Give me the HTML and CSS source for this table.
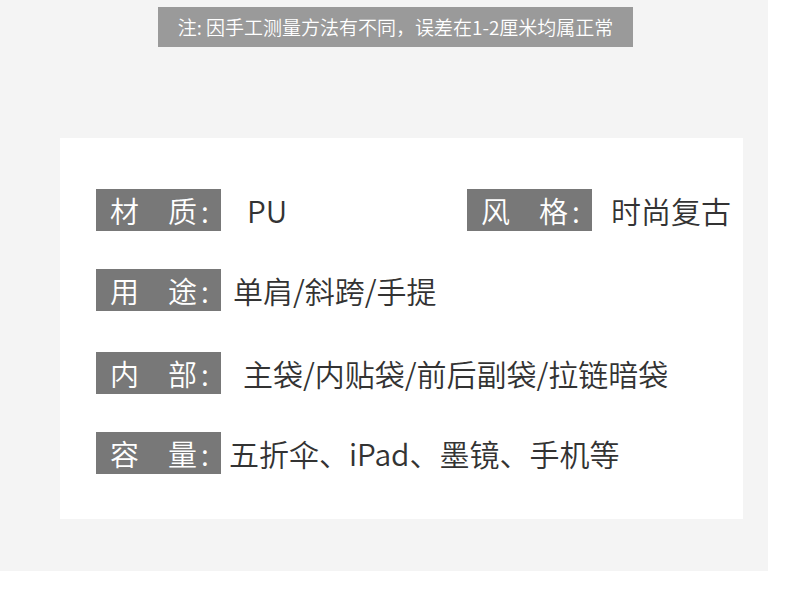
FILE: index.html
```html
<!DOCTYPE html>
<html lang="zh-CN">
<head>
<meta charset="utf-8">
<link rel="stylesheet" href="styles.css">
</head>
<body>
<div class="page">
  <div class="note">注: 因手工测量方法有不同，误差在1-2厘米均属正常</div>
  <div class="card">
    <div class="row">
      <span class="label">材　质<span class="label-colon">:</span></span><span class="value v-pu">PU</span>
      <span class="label">风　格<span class="label-colon">:</span></span><span class="value v-style">时尚复古</span>
    </div>
    <div class="row">
      <span class="label">用　途<span class="label-colon">:</span></span><span class="value v-use">单肩/斜跨/手提</span>
    </div>
    <div class="row row-wide">
      <span class="label">内　部<span class="label-colon">:</span></span><span class="value v-inner">主袋/内贴袋/前后副袋/拉链暗袋</span>
    </div>
    <div class="row">
      <span class="label">容　量<span class="label-colon">:</span></span><span class="value v-cap">五折伞、iPad、墨镜、手机等</span>
    </div>
  </div>
</div>
</body>
</html>
```

FILE: styles.css
```css
html, body {
  margin: 0;
  padding: 0;
  background: #ffffff;
}

body {
  width: 790px;
  height: 602px;
  overflow: hidden;
  font-family: "Noto Sans CJK SC", "Noto Sans", sans-serif;
}

.page {
  width: 768px;
  height: 571px;
  background: #f4f4f4;
  padding-top: 7px;
  box-sizing: border-box;
}

.note {
  margin-left: 158px;
  width: 475px;
  height: 40px;
  background: #9a9a9a;
  color: #ffffff;
  font-size: 19px;
  font-weight: 350;
  line-height: 40px;
  text-align: center;
  white-space: nowrap;
}

.card {
  margin-top: 91px;
  margin-left: 60px;
  width: 683px;
  height: 381px;
  background: #ffffff;
  box-sizing: border-box;
  padding: 51px 0 0 36px;
  display: flex;
  flex-direction: column;
  gap: 38px;
}

.row {
  display: flex;
  align-items: center;
  height: 42px;
}

.row-wide {
  margin-top: 3px;
}

.label {
  display: block;
  flex: 0 0 125px;
  height: 42px;
  box-sizing: border-box;
  padding-left: 14px;
  background: #787878;
  color: #ffffff;
  font-size: 29px;
  font-weight: 350;
  line-height: 42px;
  white-space: nowrap;
}

.label-colon {
  margin-left: 4px;
}

.value {
  flex: 0 0 auto;
  color: #333333;
  font-size: 30px;
  font-weight: 350;
  line-height: 42px;
  white-space: nowrap;
}

.v-pu { margin-left: 26px; flex-basis: 220px; }
.v-style { margin-left: 19px; }
.v-use { margin-left: 12px; }
.v-inner { margin-left: 22px; }
.v-cap { margin-left: 8px; }
```
